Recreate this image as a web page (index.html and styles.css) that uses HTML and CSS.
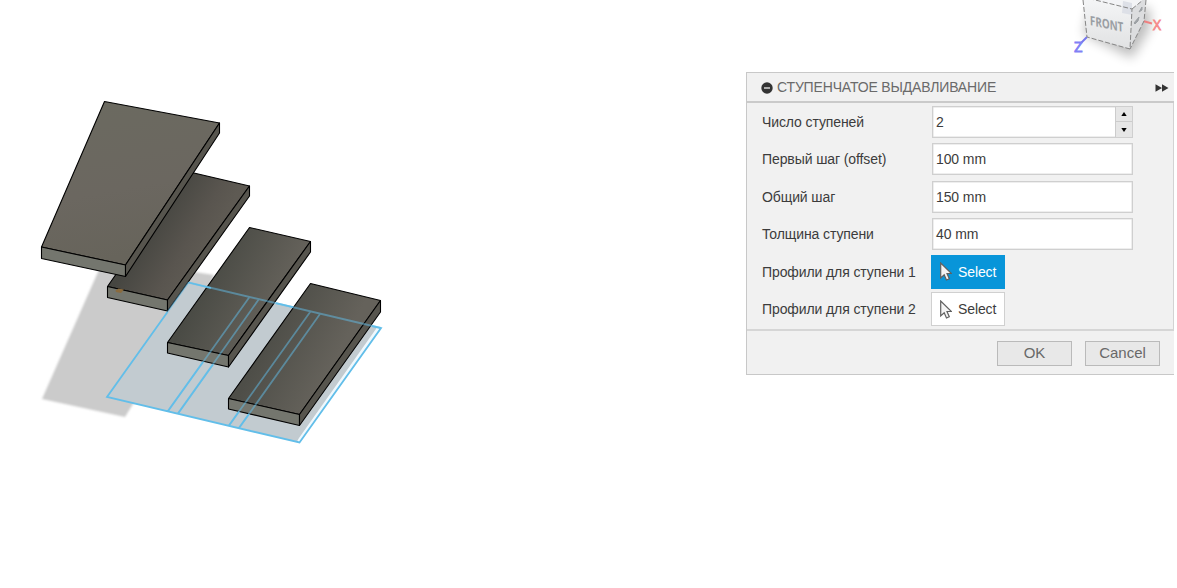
FILE: index.html
```html
<!DOCTYPE html>
<html lang="ru">
<head>
<meta charset="utf-8">
<title>Ступенчатое выдавливание</title>
<link rel="stylesheet" href="styles.css">
</head>
<body>
<main class="workspace">
  <svg class="scene" viewBox="0 0 746 588" width="746" height="588">
    <defs>
      <linearGradient id="face1" x1="0" y1="0" x2="0.2" y2="1"><stop offset="0" stop-color="#6b6a60"/><stop offset=".6" stop-color="#6b6760"/><stop offset="1" stop-color="#67645b"/></linearGradient>
      <linearGradient id="face2" gradientUnits="userSpaceOnUse" x1="158" y1="212" x2="208" y2="242"><stop offset="0" stop-color="#464641"/><stop offset=".7" stop-color="#59554f"/><stop offset="1" stop-color="#5e5a53"/></linearGradient>
      <linearGradient id="face3" gradientUnits="userSpaceOnUse" x1="205" y1="282" x2="270" y2="315"><stop offset="0" stop-color="#4a4b45"/><stop offset="1" stop-color="#64615a"/></linearGradient>
      <linearGradient id="face4" gradientUnits="userSpaceOnUse" x1="268" y1="338" x2="330" y2="370"><stop offset="0" stop-color="#4e4e48"/><stop offset="1" stop-color="#65625b"/></linearGradient>
      <filter id="soft" x="-10%" y="-10%" width="120%" height="120%"><feGaussianBlur stdDeviation="1"/></filter>
      <filter id="fine" x="-10%" y="-10%" width="120%" height="120%"><feGaussianBlur stdDeviation=".5"/></filter>
    </defs>
    <path class="shadow" filter="url(#soft)" d="M42 399 L105 256 L152 271 L188 271 L214 275 L208 289 L150 380 L136 401 L133 404 L125 417Z"/>
    <path class="shadow" filter="url(#fine)" d="M188.500 282.500 L377 327.500 L299 438 L297 441.500 L107 397Z"/>
    <path class="sketch-fill" d="M188.5 282.5 L381 328 L299.500 442.500 L107 397Z"/>
    <g class="block">
      <path fill="url(#face2)" d="M187.500 171.500 L249.500 186 L167.500 300 L107.500 286.500Z"/>
      <path class="front" d="M107.500 286.500 L167.500 300 V311 L107.500 297.500Z"/>
      <path class="side" d="M167.500 300 L249.500 186 V196 L167.500 311Z"/>
    </g>
    <path class="origin" d="M115.500 290.500l3-2 5.500 1-3 3.500-5-1z"/>
    <g class="block">
      <path fill="url(#face1)" d="M104.500 101.500 L219.500 123 L125.500 265 L41.500 247Z"/>
      <path class="front" d="M41.500 247 L125.500 265 V276.500 L41.500 258.500Z"/>
      <path class="side" d="M125.500 265 L219.500 123 V133 L125.500 276.500Z"/>
    </g>
    <g class="block">
      <path fill="url(#face3)" d="M249.500 227.500 L310.500 241.500 L228.500 355.500 L167.500 342.500Z"/>
      <path class="front" d="M167.500 342.500 L228.500 355.500 V367 L167.500 353Z"/>
      <path class="side" d="M228.500 355.500 L310.500 241.500 V252 L228.500 367Z"/>
    </g>
    <g class="block">
      <path fill="url(#face4)" d="M310.500 283.500 L380.500 300.500 L299.500 414.500 L228.500 398.500Z"/>
      <path class="front" d="M228.500 398.500 L299.500 414.500 V425.500 L228.500 409Z"/>
      <path class="side" d="M299.500 414.500 L380.500 300.500 V312 L299.500 425.500Z"/>
    </g>
    <path class="sketch-line through" d="M188.500 282.500 L381 328 M249.500 297 L168 411 M259 299 L178 413.500 M310.500 311.500 L229 425.500 M320 314 L239 428"/>
    <path class="sketch-line" d="M372 326 L381 328 L299.500 442.500 L107 397 L167.500 312 M188.500 282.500 L211 288 M276 303.200 L293 307.200 M203 362 L168 411 M213 364.500 L178 413.500 M239 411.500 L229 425.500 M249 414 L239 428"/>
    <path class="sketch-line through" d="M167.500 312 L188.500 282.500"/>
  </svg>
  <div class="sidebar">
    <svg class="view-cube" viewBox="746 0 431 72" width="431" height="72">
      <defs>
        <linearGradient id="cubeFront" x1="0" y1="0" x2="0" y2="1"><stop offset="0" stop-color="#f4f5f6"/><stop offset="1" stop-color="#e1e2e3"/></linearGradient>
        <filter id="cubeBlur" x="-50%" y="-50%" width="200%" height="200%"><feGaussianBlur stdDeviation="6"/></filter>
      </defs>
      <path class="cube-shadow" filter="url(#cubeBlur)" d="M1084 34 L1132 58 L1150 28 V8 H1090Z"/>
      <path class="axis-z" d="M1087 37 L1081 43"/>
      <path class="axis-x" d="M1143 21 L1152 23.500"/>
      <path fill="url(#cubeFront)" d="M1083 0 L1097 0 L1132 9 L1130 49 L1087 37Z"/>
      <path class="cube-side" d="M1132 9 L1143 0 L1146 0 L1144 21 L1130 49Z"/>
      <path class="cube-top" d="M1097 0 H1143 L1132 9Z"/>
      <path class="cube-corner" d="M1123 1 L1132 3 V15 L1122 13Z"/>
      <path class="cube-edge" d="M1083 0 L1087 37 L1130 49 L1132 9 L1087 -2 M1132 9 L1143 0 M1146 0 L1144 21 L1130 49"/>
      <path class="side-mark" d="M1134 23 L1139 17 L1138 21 L1135 24Z M1139 12 L1142 7 L1142 10Z"/>
      <text class="cube-label" transform="matrix(.96 .2 .03 1 1090 25)" textLength="35" lengthAdjust="spacingAndGlyphs">FRONT</text>
      <text class="letter-z" x="1074" y="52">Z</text>
      <text class="letter-x" x="1153" y="29.500" textLength="8" lengthAdjust="spacingAndGlyphs">X</text>
    </svg>
    <section class="panel">
      <header class="panel-header">
        <svg class="collapse" viewBox="0 0 12 12" width="12" height="12"><circle cx="6" cy="6" r="5.700" fill="#333"/><path d="M3 6h6" stroke="#ccc" stroke-width="1.600"/></svg>
        <h1 class="title">СТУПЕНЧАТОЕ ВЫДАВЛИВАНИЕ</h1>
        <svg class="expand" viewBox="0 0 14 8" width="14" height="8"><path d="M.5 .3 7 4 .5 7.700zM7 .3 13.500 4 7 7.700z" fill="#333"/></svg>
      </header>
      <div class="panel-body">
        <div class="row"><span class="label">Число ступеней</span><div class="field spin"><span class="value">2</span><div class="steppers"><span class="step"><svg width="6" height="4" viewBox="0 0 6 4"><path d="M.3 4 3 0 5.700 4z"/></svg></span><span class="step"><svg width="6" height="4" viewBox="0 0 6 4"><path d="M.3 0 3 4 5.700 0z"/></svg></span></div></div></div>
        <div class="row"><span class="label">Первый шаг (offset)</span><div class="field">100 mm</div></div>
        <div class="row"><span class="label">Общий шаг</span><div class="field">150 mm</div></div>
        <div class="row"><span class="label">Толщина ступени</span><div class="field">40 mm</div></div>
        <div class="row"><span class="label">Профили для ступени 1</span><div class="select active"><svg class="cursor" viewBox="0 0 12 19" width="12" height="19"><path d="M.7 1 V16 L4.200 12.800 L6.500 18 L9.300 16.800 L7 11.500 H11.500Z"/></svg>Select</div></div>
        <div class="row"><span class="label">Профили для ступени 2</span><div class="select"><svg class="cursor" viewBox="0 0 12 19" width="12" height="19"><path d="M.7 1 V16 L4.200 12.800 L6.500 18 L9.300 16.800 L7 11.500 H11.500Z"/></svg>Select</div></div>
      </div>
      <footer class="panel-footer"><div class="button">OK</div><div class="button">Cancel</div></footer>
    </section>
  </div>
</main>
</body>
</html>
```
FILE: styles.css
```css
* { box-sizing: border-box; }
body { margin: 0; background: #fff; font-family: "Liberation Sans", Arial, sans-serif; font-size: 14px; color: #3c3c3c; overflow: hidden; }
svg { display: block; flex: none; }
.workspace { display: flex; width: 1177px; height: 588px; }
.sidebar { width: 431px; }
.shadow { fill: #cbcbcb; }
.sketch-fill { fill: #8ed0ee; fill-opacity: .14; }
.block path { stroke: #000; stroke-width: 1.1; stroke-linejoin: round; }
.front { fill: #74766e; }
.side { fill: #57554e; }
.origin { fill: #8a6b3e; }
.sketch-line { fill: none; stroke: #62bee9; stroke-width: 1.8; }
.through { stroke-opacity: .5; }

.cube-shadow { fill: #000; opacity: .26; }
.cube-side { fill: #dcdddf; }
.cube-top { fill: #f3f4f6; }
.cube-corner { fill: #dde0e7; }
.cube-edge { fill: none; stroke: #858585; stroke-width: 1; stroke-dasharray: 5 2; }
.side-mark { fill: #9da1a5; stroke: #9da1a5; }
.cube-label { font: bold 13px "Open Sans", sans-serif; fill: #9a9ea3; }
.axis-z { stroke: #7777ee; stroke-width: 2; }
.axis-x { stroke: #f08080; stroke-width: 2; }
.letter-z { font: 15px "Open Sans", sans-serif; fill: #8080f5; stroke: #8080f5; stroke-width: .8; }
.letter-x { font: 15px "Open Sans", sans-serif; fill: #f58b8b; stroke: #f58b8b; stroke-width: .8; }

.panel { width: 428px; height: 303px; background: #f1f1f1; border: 1px solid #c8c8c8; border-right: 0; }
.panel-header { display: flex; align-items: center; height: 30px; padding: 0 5px 0 14px; border-bottom: 2px solid #cacaca; }
.title { flex: 1; margin: 0 0 0 4px; font-size: 14px; font-weight: 400; line-height: 16px; letter-spacing: -.16px; color: #6a6a6a; white-space: nowrap; }
.expand { margin-top: 2px; }
.collapse { margin-top: 1px; }
.panel-body { height: 228px; padding: 0 0 0 15px; border-right: 1px solid #d3d3d3; border-bottom: 2px solid #d6d6d6; }
.row { display: flex; align-items: center; height: 37.5px; }
.label { width: 170px; letter-spacing: -.1px; white-space: nowrap; }
.field { display: flex; align-items: center; width: 201px; height: 32px; padding-left: 3px; background: #fff; border: 1px solid #cfcfcf; box-shadow: inset 0 0 0 .5px #ddd; letter-spacing: -.1px; }
.spin { justify-content: space-between; }
.steppers { display: flex; flex-direction: column; width: 17px; height: 30px; border-left: 1px solid #ccc; background: #e6e6e6; }
.step { display: flex; flex: 1; align-items: center; justify-content: center; }
.step + .step { border-top: 1px solid #ccc; }
.select { display: flex; align-items: center; gap: 6px; width: 74px; height: 34px; margin-left: -1px; padding-left: 8px; background: #fff; border: 1px solid #d0d0d0; letter-spacing: -.1px; }
.active { background: #0895d9; border-color: #0895d9; color: #fff; }
.cursor path { fill: #f4f4f4; stroke: #606060; stroke-width: 1.2; }
.panel-footer { display: flex; justify-content: flex-end; gap: 13px; padding: 10px 14px 0 0; }
.button { width: 75px; height: 25px; border: 1px solid #bababa; background: #e8e8e8; color: #686868; font-size: 15px; line-height: 22px; text-align: center; }
```
